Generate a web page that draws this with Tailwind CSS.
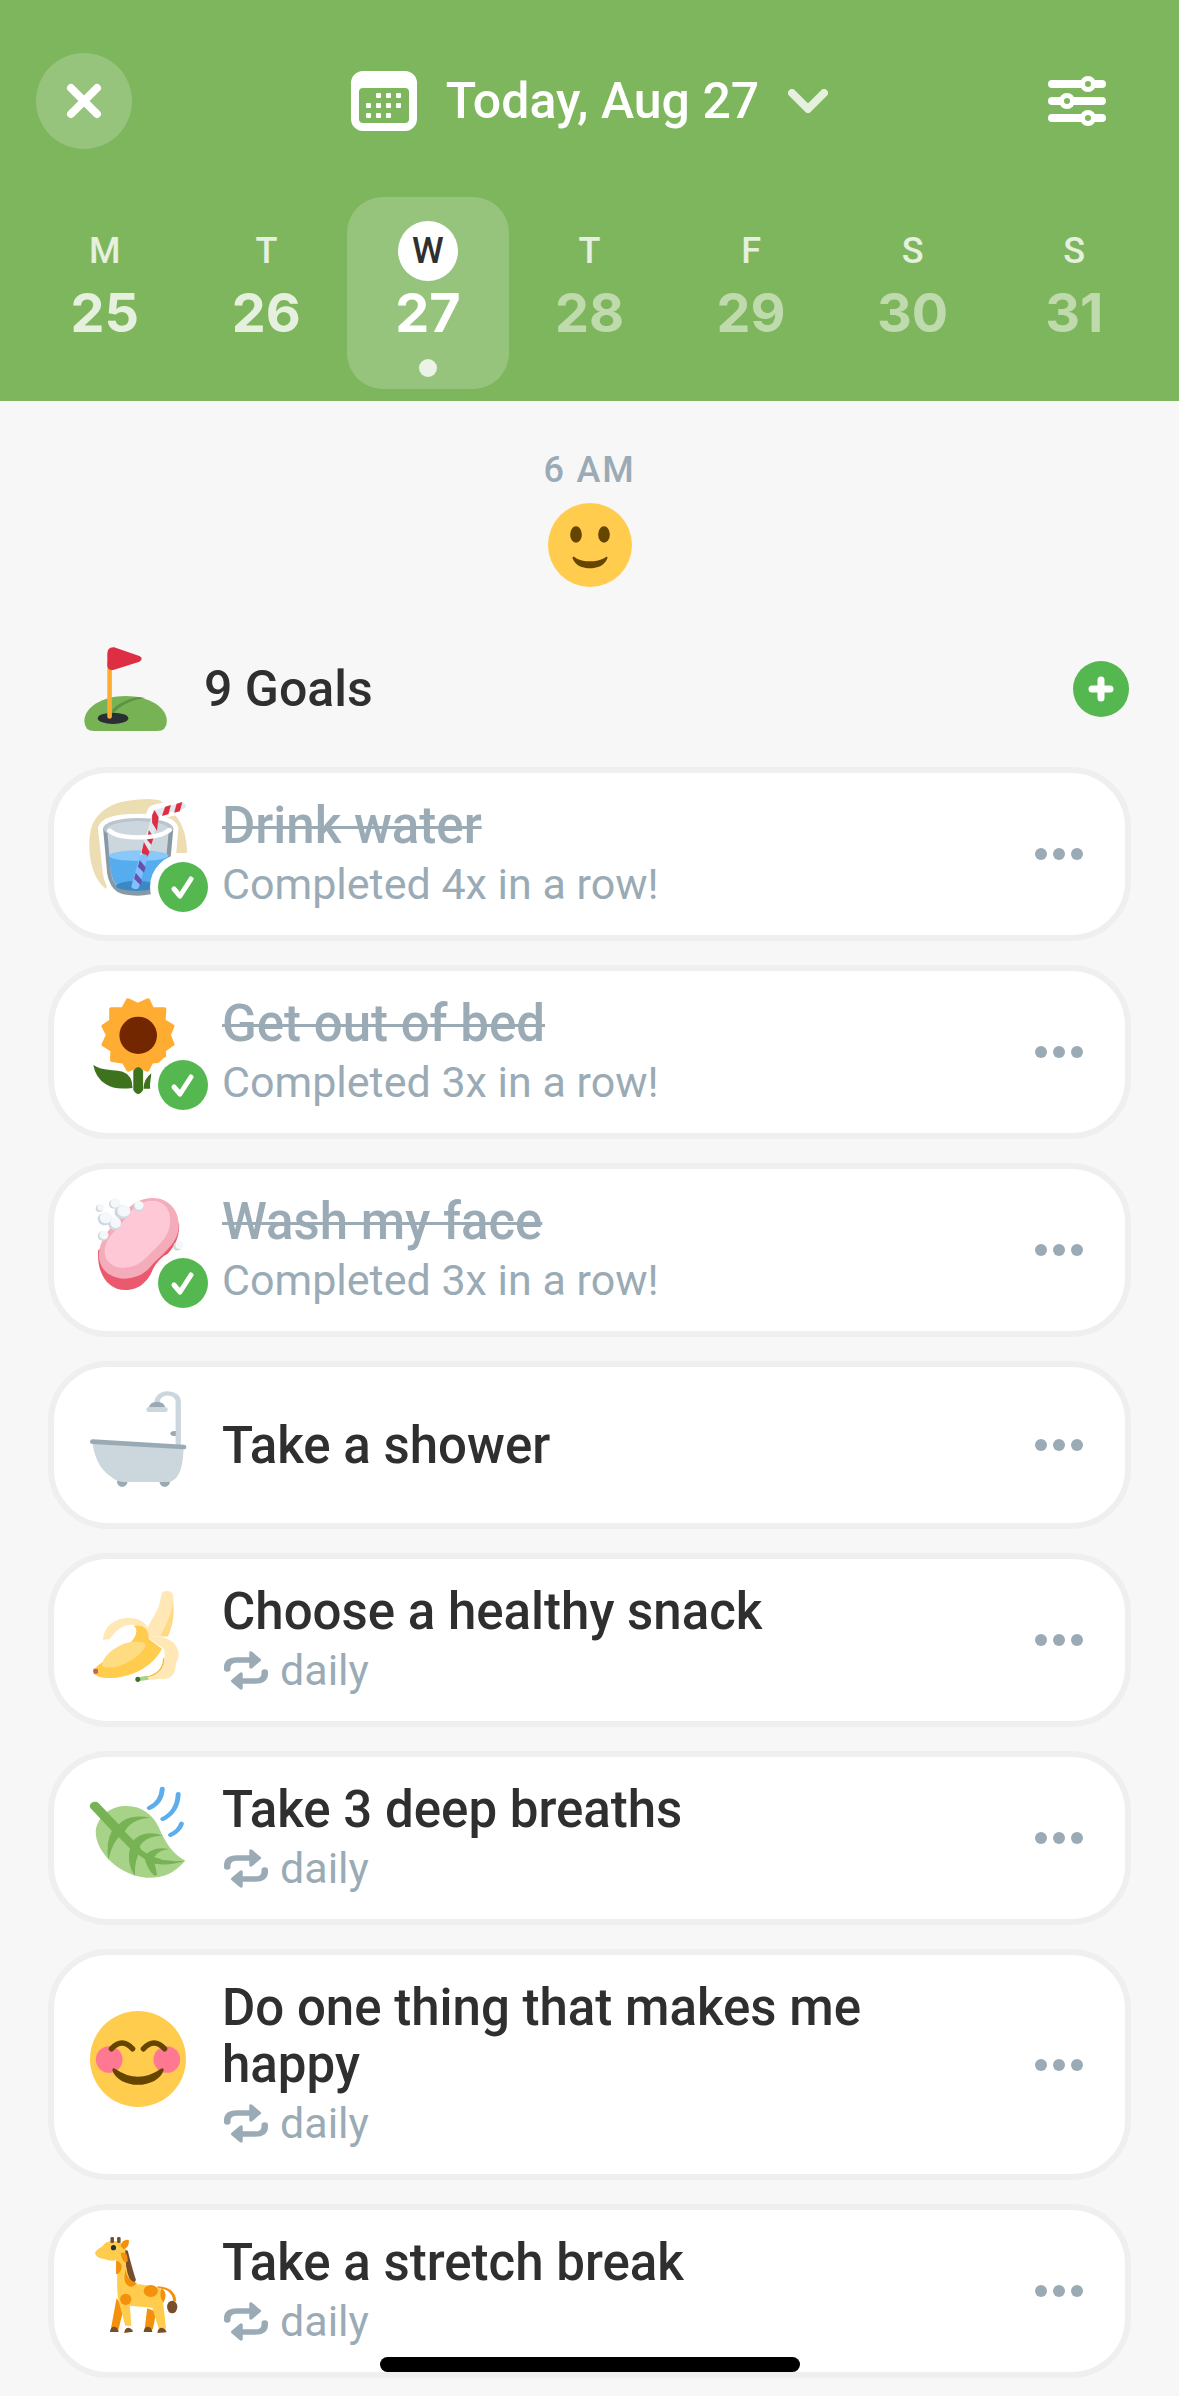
<!DOCTYPE html>
<html lang="en">
<head>
<meta charset="utf-8">
<meta name="viewport" content="width=device-width, initial-scale=1">
<title>Daily goals</title>
<script src="https://cdn.jsdelivr.net/npm/@tailwindcss/browser@4"></script>
</head>
<body class="relative bg-[#f7f7f7] font-['Roboto',sans-serif] text-[#2f2f2f]">

<svg class="hidden" aria-hidden="true">
  <symbol id="repeat" viewBox="451 325 108 117" preserveAspectRatio="none">
    <g id="arrow" fill="none" stroke="currentColor" stroke-linecap="round" stroke-linejoin="round">
      <path stroke-width="16" d="M459 379v-5q0-22 24-22h32"/>
      <path stroke-width="8" fill="currentColor" d="M517 330l21 22l-21 22z"/>
    </g>
    <use href="#arrow" transform="rotate(180 505 383.5)"/>
  </symbol>
  <symbol id="check" viewBox="0 0 50 50">
    <path d="M16 27l6 7l11-17" fill="none" stroke="#fff" stroke-width="5" stroke-linecap="round" stroke-linejoin="round"/>
  </symbol>
  <symbol id="dots" viewBox="0 0 48 12">
    <circle cx="6" cy="6" r="6"/><circle cx="24" cy="6" r="6"/><circle cx="42" cy="6" r="6"/>
  </symbol>
</svg>

<header class="bg-[#7eb65d] pt-[53px] pb-3 text-white">
  <div class="grid grid-cols-[1fr_auto_1fr] items-center px-9">
    <button aria-label="Close" class="flex size-24 items-center justify-center rounded-full bg-white/20">
      <svg class="size-9" viewBox="0 0 36 36" fill="none" stroke="#fff" stroke-width="8" stroke-linecap="round"><path d="M5 5l26 26M31 5L5 31"/></svg>
    </button>
    <button class="flex items-center gap-[29px] text-[50px] leading-[60px] font-medium">
      <svg class="h-[60px] w-[66px]" viewBox="0 0 66 60">
        <path fill="#fff" fill-rule="evenodd" d="M12 0h42a12 12 0 0 1 12 12v36a12 12 0 0 1-12 12H12A12 12 0 0 1 0 48V12A12 12 0 0 1 12 0zM12 17a4 4 0 0 0-4 4v27a4 4 0 0 0 4 4h42a4 4 0 0 0 4-4V21a4 4 0 0 0-4-4z"/>
        <g fill="#fff"><rect x="25" y="22" width="5" height="5" rx="1"/><rect x="35" y="22" width="5" height="5" rx="1"/><rect x="45" y="22" width="5" height="5" rx="1"/><rect x="15" y="32" width="5" height="5" rx="1"/><rect x="25" y="32" width="5" height="5" rx="1"/><rect x="35" y="32" width="5" height="5" rx="1"/><rect x="45" y="32" width="5" height="5" rx="1"/><rect x="15" y="42" width="5" height="5" rx="1"/><rect x="25" y="42" width="5" height="5" rx="1"/><rect x="35" y="42" width="5" height="5" rx="1"/></g>
      </svg>
      <span>Today, Aug 27</span>
      <svg class="h-6 w-10 text-white/80" viewBox="0 0 40 24" fill="none" stroke="currentColor" stroke-width="8" stroke-linecap="round" stroke-linejoin="round"><path d="M4 4l16 16L36 4"/></svg>
    </button>
    <button aria-label="Filters" class="mr-[18px] flex size-24 items-center justify-center justify-self-end">
      <svg class="h-[50px] w-[58px]" viewBox="0 0 58 50" stroke="#fff" stroke-linecap="round">
        <path stroke-width="8" d="M4 8h50M4 25h50M4 42h50"/>
        <g fill="#7eb65d" stroke-width="5"><circle cx="40" cy="8" r="5.5"/><circle cx="19" cy="25" r="5.5"/><circle cx="40" cy="42" r="5.5"/></g>
      </svg>
    </button>
  </div>

  <nav aria-label="Week" class="mt-12 grid grid-cols-7 px-6 text-center text-[36px] leading-[60px] font-medium">
    <button class="flex h-48 flex-col items-center pt-6 text-white/80"><span>M</span><span class="font-['Inter'] text-[54px] leading-[64px] font-bold">25</span></button>
    <button class="flex h-48 flex-col items-center pt-6 text-white/80"><span>T</span><span class="font-['Inter'] text-[54px] leading-[64px] font-bold">26</span></button>
    <button aria-current="date" class="flex h-48 flex-col items-center rounded-[36px] bg-white/20 pt-6"><span class="size-[60px] rounded-full bg-white text-[#2f2f2f]">W</span><span class="font-['Inter'] text-[54px] leading-[64px] font-bold">27</span><span class="mt-[14px] size-[18px] rounded-full bg-white/80"></span></button>
    <button class="flex h-48 flex-col items-center pt-6"><span class="text-white/80">T</span><span class="font-['Inter'] text-[54px] leading-[64px] font-bold text-white/50">28</span></button>
    <button class="flex h-48 flex-col items-center pt-6"><span class="text-white/80">F</span><span class="font-['Inter'] text-[54px] leading-[64px] font-bold text-white/50">29</span></button>
    <button class="flex h-48 flex-col items-center pt-6"><span class="text-white/80">S</span><span class="font-['Inter'] text-[54px] leading-[64px] font-bold text-white/50">30</span></button>
    <button class="flex h-48 flex-col items-center pt-6"><span class="text-white/80">S</span><span class="font-['Inter'] text-[54px] leading-[64px] font-bold text-white/50">31</span></button>
  </nav>
</header>

<main class="px-12 pt-12 pb-[18px]">
  <div class="flex flex-col items-center gap-3">
    <span class="text-[36px] leading-[42px] font-medium tracking-wider text-[#9aabb6]">6 AM</span>
    <svg class="size-[84px]" viewBox="0 0 36 36">
      <circle fill="#ffcc4d" cx="18" cy="18" r="18"/>
      <path fill="#664500" d="M10.5 23.6C10.6 23.8 11.7 28 18 28s7.4-4.2 7.5-4.4c.1-.2 0-.4-.2-.5-.2-.1-.4-.1-.6.1C24.600 23.200 22.700 25 18 25s-6.600-1.800-6.650-1.860c-.2-.14-.4-.14-.6-.06-.2.1-.3.3-.25.520z"/>
      <ellipse fill="#664500" cx="12" cy="13.500" rx="2.500" ry="3.500"/><ellipse fill="#664500" cx="24" cy="13.500" rx="2.500" ry="3.500"/>
    </svg>
  </div>

  <div class="mt-15 flex items-center pr-0.5 pl-9">
    <svg class="size-[84px]" viewBox="220 651 220 252" preserveAspectRatio="none">
      <path fill="#77b255" d="M221 873c0-42 48-75 108-75s108 33 108 75q0 30-26 30H247q-26 0-26-30z"/>
      <path fill="#5c9442" d="M297 850c20-26 50-42 84-46l-18-3c-34 8-58 22-70 40z"/>
      <ellipse fill="#292f33" cx="296" cy="865" rx="40" ry="17"/>
      <path d="M287 700v160" stroke="#ffac33" stroke-width="12" stroke-linecap="round"/>
      <path fill="#dd2e44" d="M281 672q0-22 18-20l66 26q12 8 0 17l-66 24q-18 4-18-15z"/>
    </svg>
    <h1 class="ml-9 flex-1 text-[50px] leading-[60px] font-medium">9 Goals</h1>
    <button aria-label="Add goal" class="size-14 rounded-full bg-[#55b750]">
      <svg viewBox="0 0 56 56" stroke="#fff" stroke-width="7" stroke-linecap="round"><path d="M28 19v18M19 28h18"/></svg>
    </button>
  </div>

  <ul class="mt-9 flex flex-col gap-6">

    <li class="flex items-center gap-9 rounded-[60px] border-6 border-[#efefef] bg-white py-6 pr-[42px] pl-9">
      <div class="relative shrink-0 pb-3">
        <svg class="size-24 overflow-visible" viewBox="122 120 235 288" preserveAspectRatio="none">
          <path fill="#edddb3" d="M162 387C126 360 112 265 125 205c10-45 45-75 90-83q55-10 80 0l40 50q24 40 25 107h-60L240 170l-60 60z"/>
          <path d="M154 205l12 135q8 65 60 65h28q54-5 62-65l10-135q-6-31-86-31t-86 31z" fill="#fff" stroke="#fff" stroke-width="25"/>
          <path d="M345 138l-60 18l-18 60" fill="none" stroke="#fff" stroke-width="46" stroke-linejoin="round" stroke-linecap="round"/>
          <path fill="#8899a6" d="M154 205l10 135q8 55 40 63q36 8 66 0q40-8 46-63l10-135z"/>
          <path fill="#ccd6dd" d="M164 210l9 130q6 40 32 48q30 8 64 0q30-8 36-48l10-130z"/>
          <path fill="#55acee" d="M168 288l6 55q8 38 32 45q30 8 60 0q30-8 36-45l12-55z"/>
          <ellipse fill="#88c9f9" cx="241" cy="287" rx="73" ry="16"/>
          <ellipse fill="#3b88c3" cx="236" cy="378" rx="50" ry="15"/>
          <ellipse fill="#b8c5cd" cx="240" cy="205" rx="86" ry="31"/>
          <ellipse fill="#ccd6dd" cx="240" cy="208" rx="76" ry="25"/>
          <path fill="none" stroke="#e1e8ed" stroke-width="19" stroke-linejoin="round" stroke-linecap="round" d="M347 138l-62 20l-30 124"/>
          <path fill="#dd2e44" d="M334 131l14-5l-6 28l-14 4zM306 140l14-5l-6 28l-16 5zM280 150l10 22l-4 40l-12-24l0-22zM266 210l12 22l-6 22l-10-14zM254 246l14 30l-6 16l-14-14z"/>
          <path stroke="#83bfff" stroke-width="19" stroke-linecap="round" d="M253 292l-20 86"/>
          <path fill="#6651ad" d="M244 300l14 22l-4 16l-15-18zM234 338l15 22l-3 16l-16-20z"/>
          <path fill="none" stroke="#fff" stroke-width="13" stroke-linecap="round" d="M170 212q15 20 70 20t76-22"/>
        </svg>
        <span class="absolute -right-[22px] -bottom-1 size-[50px] rounded-full bg-[#55b750] ring-8 ring-white"><svg class="size-full"><use href="#check"/></svg></span>
      </div>
      <div class="min-w-0 flex-1">
        <h2 class="text-[51px] leading-[57px] font-medium text-[#9aabb6] line-through decoration-[3px]">Drink water</h2>
        <p class="pt-1 text-[43px] leading-[53px] text-[#9aabb6]">Completed 4x in a row!</p>
      </div>
      <button aria-label="More options" class="text-[#9aabb6]"><svg class="h-3 w-12 fill-current"><use href="#dots"/></svg></button>
    </li>

    <li class="flex items-center gap-9 rounded-[60px] border-6 border-[#efefef] bg-white py-6 pr-[42px] pl-9">
      <div class="relative shrink-0 pb-3">
        <svg class="size-24 overflow-visible" viewBox="122 114 235 288" preserveAspectRatio="none">
          <path fill="#ffac33" stroke="#ffac33" stroke-width="10" stroke-linejoin="round" d="M215 120l24 14l25-14l10 27l30 0l-2 35l22 16l-9 27l9 28l-21 18l1 30l-32 5l-10 24l-23-12l-23 12l-11-24l-29-5l1-30l-22-17l11-29l-11-27l19-16l0-35l29 0z"/>
          <ellipse fill="#732700" cx="240" cy="226" rx="46" ry="56"/>
          <path fill="#3e721d" d="M130 315c25 20 50 12 72 20q24 10 24 49c-30 4-50 2-66-12q-24-18-30-57zM253 386q0-28 19-46l-2 46z"/>
          <path fill="#3e721d" d="M228 332q12-22 24 0v58q-12 24-24 0z"/>
        </svg>
        <span class="absolute -right-[22px] -bottom-1 size-[50px] rounded-full bg-[#55b750] ring-8 ring-white"><svg class="size-full"><use href="#check"/></svg></span>
      </div>
      <div class="min-w-0 flex-1">
        <h2 class="text-[51px] leading-[57px] font-medium text-[#9aabb6] line-through decoration-[3px]">Get out of bed</h2>
        <p class="pt-1 text-[43px] leading-[53px] text-[#9aabb6]">Completed 3x in a row!</p>
      </div>
      <button aria-label="More options" class="text-[#9aabb6]"><svg class="h-3 w-12 fill-current"><use href="#dots"/></svg></button>
    </li>

    <li class="flex items-center gap-9 rounded-[60px] border-6 border-[#efefef] bg-white py-6 pr-[42px] pl-9">
      <div class="relative shrink-0 pb-3">
        <svg class="size-24 overflow-visible" viewBox="122 123 235 288" preserveAspectRatio="none">
          <path fill="#ea596e" d="M142 285c-4 75 26 120 66 120c42 0 58-35 70-65c18-30 66-60 62-135z"/>
          <path fill="#f4abba" d="M275 129c45 0 68 46 64 91c-4 50-44 80-69 115q-24 36-65 36c-42-2-64-38-61-78c3-36 22-68 42-93c24-36 49-71 89-71z"/>
          <path fill="#ffc8d7" d="M275 137c30 0 46 28 43 68c-3 45-32 70-56 100q-26 34-60 33c-32-2-47-27-44-57c4-35 32-60 48-87c20-35 40-57 69-57z"/>
          <g fill="#cfd8df"><ellipse cx="145" cy="160" rx="9" ry="11"/><ellipse cx="181" cy="147" rx="13" ry="14"/><ellipse cx="201" cy="171" rx="19" ry="21"/><ellipse cx="158" cy="192" rx="17" ry="19"/><ellipse cx="182" cy="208" rx="15" ry="18"/><ellipse cx="154" cy="243" rx="13" ry="15"/><ellipse cx="240" cy="155" rx="12" ry="15"/><ellipse cx="336" cy="274" rx="10" ry="13"/></g>
          <g fill="#f5f8fa"><ellipse cx="148" cy="157" rx="8" ry="10"/><ellipse cx="184" cy="144" rx="12" ry="14"/><ellipse cx="205" cy="167" rx="16" ry="18"/><ellipse cx="161" cy="188" rx="15" ry="17"/><ellipse cx="185" cy="203" rx="13" ry="16"/><ellipse cx="156" cy="240" rx="11" ry="13"/><ellipse cx="242" cy="151" rx="11" ry="13"/><ellipse cx="341" cy="270" rx="10" ry="12"/></g>
        </svg>
        <span class="absolute -right-[22px] -bottom-1 size-[50px] rounded-full bg-[#55b750] ring-8 ring-white"><svg class="size-full"><use href="#check"/></svg></span>
      </div>
      <div class="min-w-0 flex-1">
        <h2 class="text-[51px] leading-[57px] font-medium text-[#9aabb6] line-through decoration-[3px]">Wash my face</h2>
        <p class="pt-1 text-[43px] leading-[53px] text-[#9aabb6]">Completed 3x in a row!</p>
      </div>
      <button aria-label="More options" class="text-[#9aabb6]"><svg class="h-3 w-12 fill-current"><use href="#dots"/></svg></button>
    </li>

    <li class="flex items-center gap-9 rounded-[60px] border-6 border-[#efefef] bg-white py-6 pr-[42px] pl-9">
      <div class="shrink-0 pb-3">
        <svg class="size-24 overflow-visible" viewBox="122 123 235 288" preserveAspectRatio="none">
          <path fill="none" stroke="#ccd6dd" stroke-width="13" d="M286 162c-3-42 54-42 52-4v130"/>
          <path fill="#9aaab4" d="M266 172q3-16 20-17q17 1 20 17z"/><rect x="260" y="171" width="52" height="15" rx="7" fill="#ccd6dd"/>
          <path fill="#9aaab4" d="M332 243v15c-18 2-18-17 0-15z"/>
          <path fill="#9aaab4" d="M188 392h26c0 24-26 24-26 0zM292 392h26c0 24-26 24-26 0z"/>
          <path fill="#ccd6dd" d="M128 280l223 13c-1 50-7 82-24 97q-6 6-14 6H202q-12 0-22-10c-30-24-44-50-52-106z"/>
          <path stroke="#9aaab4" stroke-width="14" stroke-linecap="round" d="M129 275l222 16"/>
        </svg>
      </div>
      <h2 class="min-w-0 flex-1 text-[51px] leading-[57px] font-medium">Take a shower</h2>
      <button aria-label="More options" class="text-[#9aabb6]"><svg class="h-3 w-12 fill-current"><use href="#dots"/></svg></button>
    </li>

    <li class="flex items-center gap-9 rounded-[60px] border-6 border-[#efefef] bg-white py-6 pr-[42px] pl-9">
      <div class="shrink-0 pb-3">
        <svg class="size-24 overflow-visible" viewBox="122 123 235 288" preserveAspectRatio="none">
          <path fill="#ffe8b6" d="M298 143q14-12 26 2c8 50 0 90-12 130l-50-2c-6-35 26-60 32-108z"/>
          <path fill="#ffd983" d="M325 176c-7 44-20 70-31 98h19c10-30 17-62 12-98z"/>
          <path fill="#ffe8b6" d="M154 284c2-46 34-68 70-65q44 6 44 58l-30-35c-30-12-54 14-68 41z"/>
          <path fill="#ffe8b6" d="M262 275c40-6 68 10 76 42q4 20-6 38c0 36-12 50-38 47l-30 3l-1-12c34-6 44-40 41-80z"/>
          <path fill="none" stroke="#f2b53a" stroke-width="3" d="M263 396q40-14 39-56"/>
          <path fill="#ffcc4d" d="M229 242c24-3 37 10 37 40l32 29c-26 60-80 88-130 88q-30 0-37-14l2-14c20-28 56-36 82-69c18-24 28-46 14-60z"/>
          <path fill="#ffdc82" d="M152 364c-4-26 34-66 70-73q38-4 36 12c-18 44-80 76-106 61z"/>
          <path fill="#c1694f" d="M131 371l10 1l1 13l-10 2q-5-8-1-16z"/>
          <path stroke="#a6d388" stroke-width="12" d="M244 402l20-4"/><ellipse fill="#3e721d" cx="239" cy="403" rx="6" ry="8"/>
        </svg>
      </div>
      <div class="min-w-0 flex-1">
        <h2 class="text-[51px] leading-[57px] font-medium">Choose a healthy snack</h2>
        <p class="flex items-center gap-3 pt-1 text-[43px] leading-[53px] text-[#9aabb6]"><svg class="ml-0.5 h-[39px] w-11"><use href="#repeat"/></svg>daily</p>
      </div>
      <button aria-label="More options" class="text-[#9aabb6]"><svg class="h-3 w-12 fill-current"><use href="#dots"/></svg></button>
    </li>

    <li class="flex items-center gap-9 rounded-[60px] border-6 border-[#efefef] bg-white py-6 pr-[42px] pl-9">
      <div class="shrink-0 pb-3">
        <svg class="size-24 overflow-visible" viewBox="122 117 235 288" preserveAspectRatio="none">
          <path fill="#a6d388" d="M200 184c44-6 74 22 90 62c16 48 36 82 65 101c-26 38-56 54-95 51c-64-6-126-76-124-140c4-38 30-70 64-74z"/>
          <g fill="none" stroke="#77b255" stroke-linecap="round">
            <path stroke-width="25" d="M134 183l54 70"/><path stroke-width="22" d="M187 252l48 60"/><path stroke-width="16" d="M231 308q30 34 58 40"/>
          </g>
          <path fill="#77b255" d="M176 256q-16 38-9 90q8-54 34-80zM222 302q-14 46 10 92q-2-50 14-78zM254 334q8 40 26 59l6-4q-4-30-10-46zM184 252q24-48 86-34q-52 4-66 50zM222 296q26-46 78-24q-44 0-58 36zM256 332q20-30 60-20q-28 4-38 26zM280 340q38 12 75 7q-36 16-75 9z"/>
          <path fill="none" stroke="#5dadec" stroke-width="12" stroke-linecap="round" d="M299 131q-2 42-32 58M338 147q-2 54-38 75M346 236q-6 22-27 34"/>
        </svg>
      </div>
      <div class="min-w-0 flex-1">
        <h2 class="text-[51px] leading-[57px] font-medium">Take 3 deep breaths</h2>
        <p class="flex items-center gap-3 pt-1 text-[43px] leading-[53px] text-[#9aabb6]"><svg class="ml-0.5 h-[39px] w-11"><use href="#repeat"/></svg>daily</p>
      </div>
      <button aria-label="More options" class="text-[#9aabb6]"><svg class="h-3 w-12 fill-current"><use href="#dots"/></svg></button>
    </li>

    <li class="flex items-center gap-9 rounded-[60px] border-6 border-[#efefef] bg-white py-6 pr-[42px] pl-9">
      <div class="shrink-0 pb-3">
        <svg class="size-24" viewBox="0 0 36 36">
          <circle fill="#ffcc4d" cx="18" cy="18" r="18"/>
          <circle fill="#ff7892" cx="7.200" cy="18.200" r="5"/><circle fill="#ff7892" cx="28.800" cy="18.200" r="5"/>
          <path fill="none" stroke="#664500" stroke-width="2" stroke-linecap="round" d="M8 14.200q4-4.400 8 0M20 14.200q4-4.400 8 0"/>
          <path fill="#664500" d="M8.400 22.200c-.1-.7.6-.9 1-.5q8.600 6 17.200 0c.4-.4 1.100-.2 1 .5c-1 3.300-5.200 5.500-9.600 5.500s-8.600-2.200-9.600-5.500z"/>
        </svg>
      </div>
      <div class="min-w-0 flex-1">
        <h2 class="max-w-[700px] text-[51px] leading-[57px] font-medium">Do one thing that makes me happy</h2>
        <p class="flex items-center gap-3 pt-1 text-[43px] leading-[53px] text-[#9aabb6]"><svg class="ml-0.5 h-[39px] w-11"><use href="#repeat"/></svg>daily</p>
      </div>
      <button aria-label="More options" class="text-[#9aabb6]"><svg class="h-3 w-12 fill-current"><use href="#dots"/></svg></button>
    </li>

    <li class="flex items-center gap-9 rounded-[60px] border-6 border-[#efefef] bg-white py-6 pr-[42px] pl-9">
      <div class="shrink-0 pb-3">
        <svg class="size-24 overflow-visible" viewBox="98 141 188 288" preserveAspectRatio="none">
          <path fill="#f4900c" d="M150 325l14 30l-10 63l-15-2zM210 355l18 10l-7 53h-16z"/>
          <path fill="none" stroke="#f4900c" stroke-width="6" d="M230 292q32 2 34 42"/><ellipse fill="#774d2b" cx="259" cy="351" rx="10" ry="19"/>
          <path fill="#774d2b" d="M164 178l8 4q8 50 16 88l-4 10l-12-10z"/>
          <path fill="#ffcc4d" d="M108 188c4-12 14-16 18-26c12-16 34-8 42 6q-4 60 8 100q6 16 18 15l34 8q12 4 12 30l7 95l-14 2l-13-65l-44-6l3 60h-12l-14-80c-4-50 0-80-3-116q-12 4-24-4q-18-4-18-19z"/>
          <g fill="#f4900c"><path d="M158 190q14-10 14 24q-10 10-14-24zM149 212q12 4 11 22q-4 20-11 18zM168 238q0 30 22 42q-10 18-20 4q-8-12-2-46z"/><ellipse cx="217" cy="303" rx="14" ry="18"/><ellipse cx="168" cy="328" rx="11" ry="17"/><path d="M238 294q14 16 4 44q-10-18-4-44z"/><path d="M158 168q4-22 16-18q2 20-10 28z"/></g>
          <g fill="#774d2b"><rect x="138" y="141" width="7" height="18" rx="3"/><rect x="151" y="141" width="7" height="18" rx="3"/><path d="M137 426q1-16 9-16q8 4 8 16zM165 429q1-16 9-16q8 4 8 12zM203 426q1-16 9-16q8 4 8 16zM230 429q1-16 9-16q8 4 9 14z"/></g>
          <ellipse fill="#292f33" cx="144" cy="173" rx="5" ry="8"/>
        </svg>
      </div>
      <div class="min-w-0 flex-1">
        <h2 class="text-[51px] leading-[57px] font-medium">Take a stretch break</h2>
        <p class="flex items-center gap-3 pt-1 text-[43px] leading-[53px] text-[#9aabb6]"><svg class="ml-0.5 h-[39px] w-11"><use href="#repeat"/></svg>daily</p>
      </div>
      <button aria-label="More options" class="text-[#9aabb6]"><svg class="h-3 w-12 fill-current"><use href="#dots"/></svg></button>
    </li>
  </ul>
</main>

<div class="fixed bottom-6 left-1/2 h-[15px] w-[420px] -translate-x-1/2 rounded-full bg-black"></div>
</body>
</html>
